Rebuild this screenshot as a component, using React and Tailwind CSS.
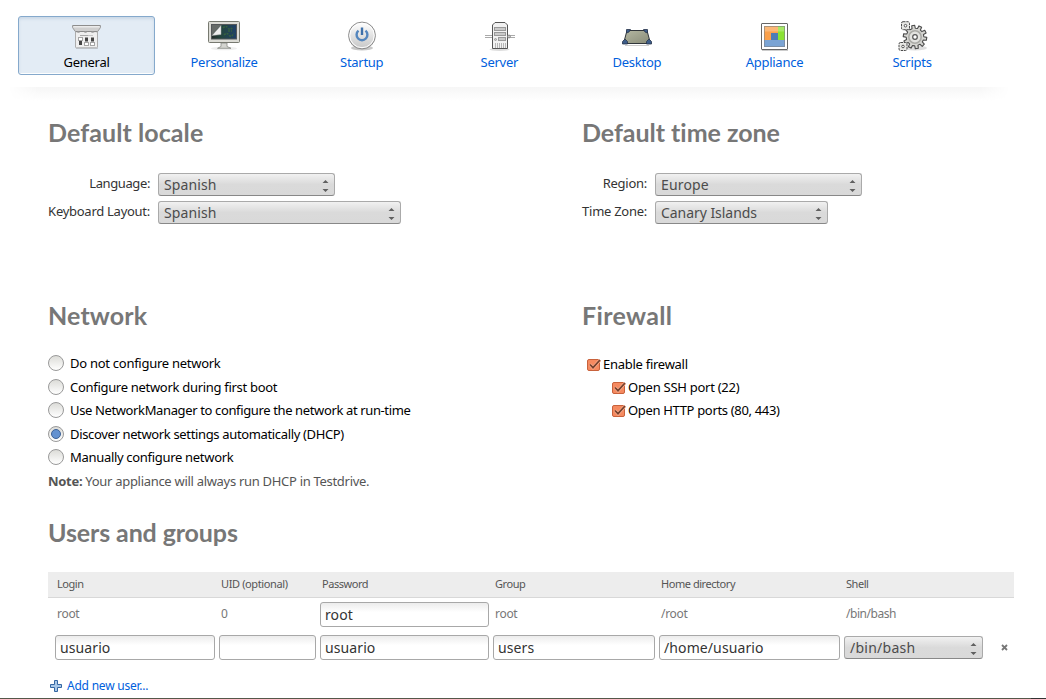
import React from "react";

function GeneralIcon() {
  return (
    <svg width="32" height="32" viewBox="0 0 32 32">
      <path d="M5 28.500h22" stroke="#c3cad2" />
      <path d="M4.500 9.500h22v17.500q0 .8-.8.8H5.300q-.8 0-.8-.8z" fill="#efefef" stroke="#adadad" />
      <path d="M1.500 5.500h28v2l-2.800 4H4.300L1.500 7.500z" fill="#cfcfcf" stroke="#9b9b9b" />
      <path d="M2 5.500h27" stroke="#8d8d8d" />
      <path d="M2.500 6.800h26" stroke="#f3f3f3" strokeWidth="1.200" />
      <path d="M5 11.500l2.500.8 2-.8h3l2 .8 2-.8h3l2 .8 2.500-.8 2 .3" fill="none" stroke="#8a8a8a" />
      <path d="M9 15.500h13" stroke="#c6c6c6" />
      <path d="M9 15.500h8" stroke="#aaa" />
      <g fill="#454545">
        <rect x="8" y="20" width="3" height="5" />
        <rect x="14" y="17.500" width="3" height="4" />
        <rect x="20" y="17.500" width="3" height="4" />
      </g>
      <g stroke="#a5a5a5" fill="#fff">
        <rect x="7.500" y="17.500" width="4" height="3" />
        <rect x="13.500" y="22.500" width="4" height="3" />
        <rect x="19.500" y="22.500" width="4" height="3" />
      </g>
    </svg>
  );
}

function MonitorIcon() {
  return (
    <svg width="32" height="32" viewBox="0 0 32 32">
      <defs>
        <linearGradient id="screen" x2="1">
          <stop offset="0" stopColor="#222b28" />
          <stop offset=".4" stopColor="#24463f" />
          <stop offset="1" stopColor="#1f4068" />
        </linearGradient>
      </defs>
      <ellipse cx="16" cy="28.500" rx="13" ry="1.800" fill="#eee" />
      <path d="M13 23h6v3.500l4 1.800H9.500L13 26.500z" fill="#d4d5d0" stroke="#888a85" strokeWidth=".8" />
      <rect x=".5" y="1.500" width="31" height="21" rx="1" fill="#dcdcd6" stroke="#777970" />
      <rect x="3.500" y="4.500" width="25" height="14.500" fill="url(#screen)" stroke="#55585a" />
      <path d="M15 8q3-3 5 0t5-1M16 15q3-3 5 0t5-2M20 11h4" fill="none" stroke="#36603f" strokeWidth="1.600" strokeDasharray="2 1" />
      <path d="M4 5h9L4 15z" fill="#666b68" />
      <path d="M4 15.500L13 5.500v9z" fill="#eee" stroke="#aaa" strokeWidth=".5" />
    </svg>
  );
}

function PowerIcon() {
  return (
    <svg width="32" height="32" viewBox="0 0 32 32">
      <defs>
        <linearGradient id="knob" y2="1" x2="0">
          <stop offset="0" stopColor="#fff" />
          <stop offset="1" stopColor="#c6c6c6" />
        </linearGradient>
      </defs>
      <ellipse cx="16" cy="28" rx="11" ry="2.500" fill="#c8c8c8" />
      <circle cx="16" cy="15.500" r="13.400" fill="url(#knob)" stroke="#888" />
      <circle cx="16" cy="15.500" r="12.200" fill="none" stroke="#fff" />
      <path d="M12.500 10.700a5.400 5.400 0 1 0 7 0" fill="none" stroke="#5486be" strokeWidth="2.400" />
      <path d="M16 7.500v7.500" stroke="#3d70aa" strokeWidth="2.400" />
    </svg>
  );
}

function ServerIcon() {
  return (
    <svg width="32" height="32" viewBox="0 0 32 32">
      <ellipse cx="16.500" cy="29.500" rx="10" ry="1.500" fill="#ddd" />
      <path d="M2 15.500h7M26 15.500h6M2 17.500h7M26 17.500h6" stroke="#aaa" />
      <path d="M9.500 28.500V5l2.500-2.500h10L24.500 5v23.500z" fill="#f1f1f1" stroke="#555" />
      <g fill="#c9c9c9" stroke="#999">
        <rect x="11.500" y="7.500" width="11" height="3" />
        <rect x="11.500" y="12.500" width="11" height="3" />
        <rect x="15.500" y="17.500" width="7" height="3" />
        <circle cx="12.500" cy="19.500" r="1" />
      </g>
      <path d="M12.500 23v5M14.500 23v5M16.500 23v5M18.500 23v5M20.500 23v5M22.500 23v5" stroke="#b5b5b5" />
      <circle cx="26" cy="16.500" r="1.400" fill="#ccc" stroke="#888" />
    </svg>
  );
}

function DesktopIcon() {
  return (
    <svg width="32" height="32" viewBox="0 0 32 32">
      <defs>
        <linearGradient id="desk" x2="1" y2="1">
          <stop offset="0" stopColor="#b5b8a2" />
          <stop offset="1" stopColor="#888b78" />
        </linearGradient>
      </defs>
      <path d="M4 25.500h24" stroke="#ccc" />
      <path d="M6 10.500h20l3.500 13h-27z" fill="url(#desk)" stroke="#30353a" />
      <g fill="#3c5c88" stroke="#26324a" strokeWidth=".8">
        <path d="M5.500 13V9.500h4L8 12zM26.500 13V9.500h-4L24 12z" />
        <path d="M1.500 24v-2.500L4 19l2.500 2.500V24zM25.500 24v-2.500L28 19l2.500 2.500V24z" />
      </g>
    </svg>
  );
}

function ApplianceIcon() {
  return (
    <svg width="32" height="32" viewBox="0 0 32 32">
      <path d="M4 30.500h26" stroke="#ccc" />
      <rect x="3.500" y="3.500" width="26" height="26" rx=".5" fill="#fff" stroke="#666" />
      <path d="M6 6h14v7h-7v7H6z" fill="#fba04a" />
      <path d="M20 6h7v14h-7z" fill="#8ae234" />
      <path d="M6 20h7v-7h7v7h7v7H6z" fill="#7ba4d4" />
      <path d="M13 13h7v7h-7z" fill="#4b7bb5" />
      <path d="M6.500 6.500h20v5h-20z" fill="#fff" opacity=".25" />
      <rect x="6.500" y="6.500" width="20" height="20" fill="none" stroke="#7c8288" strokeOpacity=".6" />
    </svg>
  );
}

function Gear({ cx, cy, teeth, inner, outer, ...rest }) {
  const step = (Math.PI * 2) / teeth;
  const points = [];
  for (let i = 0; i < teeth; i++) {
    for (const [offset, radius] of [[-0.3, inner], [-0.2, outer], [0.2, outer], [0.3, inner]]) {
      const angle = (i + offset + 0.25) * step;
      points.push(`${(cx + Math.cos(angle) * radius).toFixed(2)},${(cy + Math.sin(angle) * radius).toFixed(2)}`);
    }
  }
  return <polygon points={points.join(" ")} strokeLinejoin="round" {...rest} />;
}

function ScriptsIcon() {
  return (
    <svg width="32" height="32" viewBox="0 0 32 32">
      <ellipse cx="19" cy="28" rx="12" ry="2.500" fill="#ddd" />
      <Gear cx={19} cy={17} teeth={10} inner={8.8} outer={11.8} fill="#d6d6d2" stroke="#4c4c4c" strokeWidth="1.100" />
      <circle cx="19" cy="17" r="6.200" fill="#e2e2df" stroke="#aaaaa6" strokeWidth="1.600" />
      <circle cx="19" cy="17" r="2.300" fill="#fff" stroke="#555" strokeWidth="1.200" />
      <rect x="5.500" y="1.700" width="8" height="8" rx="1.500" fill="#e8e8e5" stroke="#4c4c4c" strokeDasharray="2.500 .8" />
      <rect x="3" y="22.500" width="8" height="8" rx="1.500" fill="#e8e8e5" stroke="#4c4c4c" strokeDasharray="2.500 .8" />
      <circle cx="9.500" cy="5.700" r="1.300" fill="#fff" stroke="#555" />
      <circle cx="7" cy="26.500" r="1.300" fill="#fff" stroke="#555" />
    </svg>
  );
}

const tabs = [
  ["General", GeneralIcon],
  ["Personalize", MonitorIcon],
  ["Startup", PowerIcon],
  ["Server", ServerIcon],
  ["Desktop", DesktopIcon],
  ["Appliance", ApplianceIcon],
  ["Scripts", ScriptsIcon],
];

function Heading({ children, className = "" }) {
  return (
    <h2 className={`font-['Lato',sans-serif] text-[25px] leading-[30px] font-bold whitespace-nowrap text-[#777] ${className}`}>
      {children}
    </h2>
  );
}

function Select({ children, className = "" }) {
  return (
    <div className={`flex h-[23px] items-center justify-between rounded-[3px] border border-[#aaa] border-b-[#888] bg-linear-to-b from-[#f1f1f1] via-[#dadada] to-[#d9d9d9] px-[5px] text-[14px] whitespace-nowrap text-[#4c4c4c] ${className}`}>
      <span>{children}</span>
      <svg width="7" height="13" viewBox="0 0 7 13" className="mt-[2px]" fill="#606060">
        <path d="M0.500 4L3.500 1l3 3zM0.500 10h6l-3 3z" />
      </svg>
    </div>
  );
}

function Input({ children }) {
  return (
    <div className="mr-1 flex h-[25px] items-center rounded-[3px] border border-[#a8a8a8] bg-linear-to-b from-[#ececec] to-white to-40% pl-1 text-[14px] tracking-[0.1px] whitespace-nowrap text-[#333]">
      {children}
    </div>
  );
}

function Radio({ checked, className, children }) {
  return (
    <div className="flex h-[23.5px] items-center gap-1.5 whitespace-nowrap text-black">
      <span className="-mt-px flex size-4 items-center justify-center rounded-full border border-[#999] bg-linear-to-b from-[#dcdcd8] to-white">
        {checked && <span className="size-2.5 rounded-full border border-[#3e6296] bg-[#6391d0]" />}
      </span>
      <span className={`-mt-px ${className}`}>{children}</span>
    </div>
  );
}

function Check({ children, className = "" }) {
  return (
    <div className={`flex h-[23.3px] items-center gap-[2px] whitespace-nowrap text-black ${className}`}>
      <svg width="14" height="14" viewBox="0 0 14 14">
        <rect x=".5" y="1.500" width="12" height="11" rx="1.500" fill="#f58a60" stroke="#c8623c" />
        <path d="M3 6.500l3 3.200 7-7.700" fill="none" stroke="#ffb596" strokeWidth="3" />
        <path d="M3 6.500l3 3.200 7-7.700" fill="none" stroke="#75412d" strokeWidth="1.800" />
      </svg>
      <span className="-mt-0.5">{children}</span>
    </div>
  );
}

const columns = "grid grid-cols-[164px_101px_173px_166px_185px_139px_1fr]";

export default function App() {
  return (
    <div className="flex h-[699px] w-[1046px] flex-col overflow-hidden bg-white font-['Noto_Sans',sans-serif] text-[13px] leading-[18px] tracking-[-0.27px] text-[#333]">
      <nav className="flex h-[87px] shrink-0 pt-4 pl-[18px]">
        {tabs.map(([name, Icon], i) => (
          <div key={name} className="w-[137.600px]">
            <div
              className={`flex h-[59px] w-[137px] flex-col items-center rounded-[3px] border pt-[3px] ${
                i === 0 ? "border-[#85a9cc] bg-[#e3ecf5] text-black shadow-[inset_0_2px_3px_#cbd8e6,inset_0_-1px_0_#fff]" : "border-transparent text-[#0060dd]"
              }`}
            >
              <Icon />
              <span className="mt-px">{name}</span>
            </div>
          </div>
        ))}
      </nav>
      <div className="mx-2 h-[14px] w-[1002px] shrink-0 bg-linear-to-b from-[#f6f6f6] to-white mask-x-from-97%" />

      <main className="flex flex-col pt-4 pl-12">
        <div className="flex h-[183px]">
          <section className="w-[534px]">
            <Heading className="tracking-[0.08px]">Default locale</Heading>
            <div className="mt-[26px] grid grid-cols-[102px_auto] justify-start gap-x-2 gap-y-[5px]">
              <span className="mt-px text-right tracking-[-0.4px] whitespace-nowrap">Language:</span>
              <Select className="w-[177px] tracking-[0.1px]">Spanish</Select>
              <span className="mt-px text-right whitespace-nowrap">Keyboard Layout:</span>
              <Select className="w-[243px] tracking-[0.1px]">Spanish</Select>
            </div>
          </section>
          <section>
            <Heading className="tracking-[-0.03px]">Default time zone</Heading>
            <div className="mt-[26px] grid grid-cols-[65px_auto] justify-start gap-x-2 gap-y-[5px]">
              <span className="mt-px text-right whitespace-nowrap">Region:</span>
              <Select className="w-[207px] tracking-[0.15px]">Europe</Select>
              <span className="mt-px text-right whitespace-nowrap">Time Zone:</span>
              <Select className="w-[173px] tracking-[-0.05px]">Canary Islands</Select>
            </div>
          </section>
        </div>

        <div className="flex h-[217px]">
          <section className="w-[534px]">
            <Heading className="tracking-[0.15px]">Network</Heading>
            <div className="mt-[22px]">
              <Radio className="tracking-[-0.27px]">Do not configure network</Radio>
              <Radio className="tracking-[-0.3px]">Configure network during first boot</Radio>
              <Radio className="tracking-[-0.37px]">Use NetworkManager to configure the network at run-time</Radio>
              <Radio checked className="tracking-[-0.35px]">Discover network settings automatically (DHCP)</Radio>
              <Radio className="tracking-[-0.31px]">Manually configure network</Radio>
            </div>
            <p className="mt-[2px] tracking-[-0.3px] whitespace-nowrap text-[#555]">
              <b>Note:</b> Your appliance will always run DHCP in Testdrive.
            </p>
          </section>
          <section>
            <Heading className="tracking-[0.35px]">Firewall</Heading>
            <div className="mt-[23px]">
              <Check className="pl-[5px]">Enable firewall</Check>
              <Check className="pl-[30px]">Open SSH port (22)</Check>
              <Check className="pl-[30px] tracking-[-0.33px]">Open HTTP ports (80, 443)</Check>
            </div>
          </section>
        </div>

        <section>
          <Heading className="tracking-[-0.11px]">Users and groups</Heading>
          <div className="mt-[25px] w-[966px]">
            <div className={`${columns} h-[26px] items-center border-b border-[#d8d8d8] bg-[#ededed] pb-[2px] pl-[9px] text-[11px] tracking-[-0.45px] text-[#555]`}>
              <span>Login</span>
              <span className="tracking-[-0.38px]">UID (optional)</span>
              <span>Password</span>
              <span>Group</span>
              <span>Home directory</span>
              <span>Shell</span>
            </div>
            <div className={`${columns} h-[33px] items-center pl-[7px] text-[12px] tracking-[-0.3px] text-[#777]`}>
              <span className="-mt-0.5 pl-0.5">root</span>
              <span className="-mt-0.5 pl-0.5">0</span>
              <Input>root</Input>
              <span className="-mt-0.5 pl-0.5">root</span>
              <span className="-mt-0.5 pl-0.5">/root</span>
              <span className="-mt-0.5 pl-0.5 tracking-[-0.45px]">/bin/bash</span>
            </div>
            <div className={`${columns} h-[33px] items-center pl-[7px]`}>
              <Input>usuario</Input>
              <Input />
              <Input>usuario</Input>
              <Input>users</Input>
              <Input>/home/usuario</Input>
              <Select className="tracking-[0.25px]">/bin/bash</Select>
              <svg width="7" height="7" viewBox="0 0 7 7" className="ml-[18px]">
                <path d="M1 1l5 5M6 1L1 6" stroke="#777" strokeWidth="1.800" />
              </svg>
            </div>
          </div>
          <div className="mt-[13px] flex items-center gap-[5px] pl-[2px] text-[12px] tracking-[-0.22px] whitespace-nowrap text-[#0060dd]">
            <svg width="12" height="12" viewBox="0 0 12 12">
              <path d="M4.500.5h3v4h4v3h-4v4h-3v-4h-4v-3h4z" fill="#a9c8e8" stroke="#3567a3" />
            </svg>
            <span>Add new user...</span>
          </div>
        </section>
      </main>
      <div className="mt-auto flex h-px shrink-0 bg-[#55574a]">
        <div className="ml-auto w-[15px] bg-[#333]" />
      </div>
    </div>
  );
}
